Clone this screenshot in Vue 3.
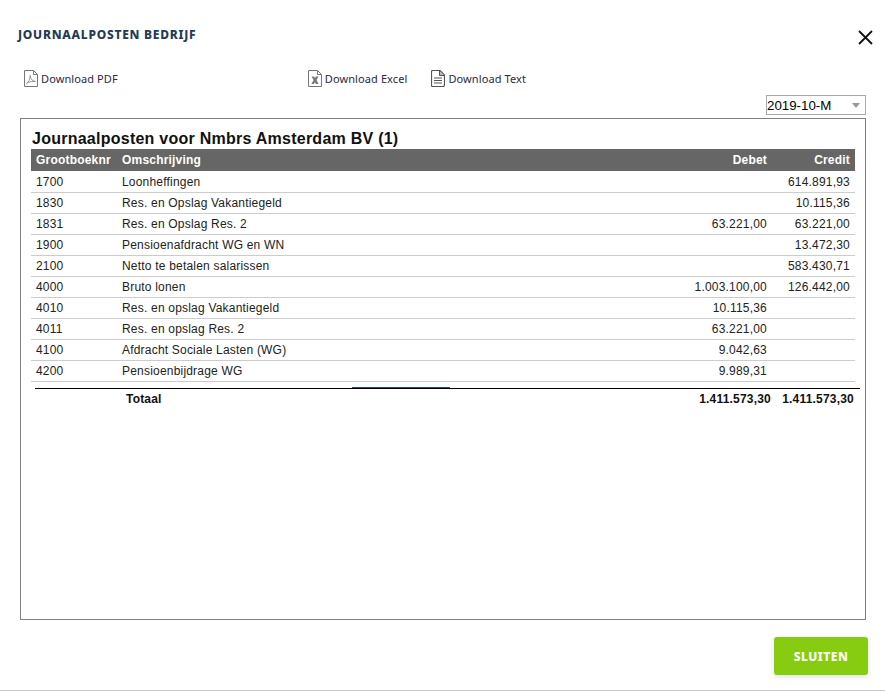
<script setup>
const rows = [
  { nr: '1700', name: 'Loonheffingen', debet: '', credit: '614.891,93' },
  { nr: '1830', name: 'Res. en Opslag Vakantiegeld', debet: '', credit: '10.115,36' },
  { nr: '1831', name: 'Res. en Opslag Res. 2', debet: '63.221,00', credit: '63.221,00' },
  { nr: '1900', name: 'Pensioenafdracht WG en WN', debet: '', credit: '13.472,30' },
  { nr: '2100', name: 'Netto te betalen salarissen', debet: '', credit: '583.430,71' },
  { nr: '4000', name: 'Bruto lonen', debet: '1.003.100,00', credit: '126.442,00' },
  { nr: '4010', name: 'Res. en opslag Vakantiegeld', debet: '10.115,36', credit: '' },
  { nr: '4011', name: 'Res. en opslag Res. 2', debet: '63.221,00', credit: '' },
  { nr: '4100', name: 'Afdracht Sociale Lasten (WG)', debet: '9.042,63', credit: '' },
  { nr: '4200', name: 'Pensioenbijdrage WG', debet: '9.989,31', credit: '' },
]
</script>

<template>
  <div class="modal">
    <header class="modal__head">
      <h1 class="modal__title">JOURNAALPOSTEN BEDRIJF</h1>
      <svg class="modal__close" width="15" height="15" viewBox="0 0 15 15" aria-label="Sluiten">
        <path d="M1 1 14 14M14 1 1 14" stroke="#111" stroke-width="1.8" fill="none" />
      </svg>
    </header>

    <div class="downloads">
      <a class="dl dl--pdf">
        <svg width="14" height="17" viewBox="0 0 14 17">
          <path d="M.5.5h9l4 4v12H.5z" fill="#fff" stroke="#777" />
          <path d="M9.500.5v4h4" fill="none" stroke="#777" />
          <path d="M2.500 13.500c2-1 3.500-4 3.700-8 .3 3.500 2 5.500 5.300 6-3-.3-6.500.2-9 2z" fill="none" stroke="#888" stroke-width=".9" />
        </svg>
        Download PDF
      </a>
      <a class="dl dl--excel">
        <svg width="14" height="17" viewBox="0 0 14 17">
          <path d="M.5.5h9l4 4v12H.5z" fill="#fff" stroke="#777" />
          <path d="M9.500.5v4h4" fill="none" stroke="#777" />
          <path d="M3.500 6.500h2.700L7 8.300l.9-1.800h2.600L8.500 10l2.100 4H7.900L7 12l-1 2H3.400l2.200-4z" fill="#777" />
        </svg>
        Download Excel
      </a>
      <a class="dl">
        <svg width="14" height="17" viewBox="0 0 14 17">
          <path d="M1.500.5h7.500l4.500 4.500v10a1.500 1.500 0 0 1-1.500 1.500H1.500a1 1 0 0 1-1-1v-14a1 1 0 0 1 1-1z" fill="#fff" stroke="#555" stroke-width="1.200" />
          <path d="M8.500 1v4.500H13" fill="#bbb" stroke="#555" />
          <path d="M3 8h8M3 10.500h8M3 13h8" stroke="#555" stroke-width="1.100" />
        </svg>
        Download Text
      </a>
    </div>

    <div class="period">
      <div class="period__select">
        <span>2019-10-M</span>
        <i class="period__arrow"></i>
      </div>
    </div>

    <section class="report">
      <h2 class="report__title">Journaalposten voor Nmbrs Amsterdam BV (1)</h2>
      <div class="grid grid--head">
        <span>Grootboeknr</span>
        <span>Omschrijving</span>
        <span class="num">Debet</span>
        <span class="num">Credit</span>
      </div>
      <div v-for="row in rows" :key="row.nr" class="grid grid--row">
        <span>{{ row.nr }}</span>
        <span>{{ row.name }}</span>
        <span class="num">{{ row.debet }}</span>
        <span class="num">{{ row.credit }}</span>
      </div>
      <div class="total">
        <i class="total__mark"></i>
        <span class="total__label">Totaal</span>
        <span class="total__num total__num--debet">1.411.573,30</span>
        <span class="total__num">1.411.573,30</span>
      </div>
    </section>

    <footer class="modal__foot">
      <button class="close-btn" type="button">SLUITEN</button>
    </footer>
  </div>
</template>

<style>
html, body {
  margin: 0;
  background: #fff;
}
</style>

<style scoped>
.modal {
  width: 885px;
  height: 691px;
  box-sizing: border-box;
  display: flex;
  flex-direction: column;
  background: #fff;
  border-bottom: 1px solid #c9c9d3;
  overflow: hidden;
}

.modal__head {
  height: 66px;
  padding: 0 12px 0 18px;
  display: flex;
  justify-content: space-between;
  flex-shrink: 0;
}

.modal__title {
  margin: 26px 0 0;
  font: 800 12px/17px "Noto Sans", sans-serif;
  letter-spacing: 0.75px;
  color: #253b55;
}

.modal__close {
  margin: 29.500px 0 0;
}

.downloads {
  height: 24px;
  padding-left: 24px;
  display: flex;
  align-items: center;
  flex-shrink: 0;
}

.dl {
  display: flex;
  align-items: center;
  gap: 3px;
  font: 400 11px/17px "Noto Sans", sans-serif;
  letter-spacing: 0.1px;
  color: #2a2a44;
  margin-right: 24px;
}

.dl--pdf {
  margin-right: 190px;
}

.period {
  height: 23px;
  padding: 5px 19px 0 0;
  display: flex;
  justify-content: flex-end;
  flex-shrink: 0;
}

.period__select {
  width: 100px;
  height: 20px;
  box-sizing: border-box;
  border: 1px solid #a9a9a9;
  display: flex;
  align-items: center;
  justify-content: space-between;
  padding: 0 5px 0 0;
  font: 400 13.300px "Liberation Sans", sans-serif;
  color: #000;
}

.period__arrow {
  width: 0;
  height: 0;
  border: 4px solid transparent;
  border-top: 5px solid #999;
  border-bottom: 0;
}

.report {
  width: 846px;
  height: 502px;
  box-sizing: border-box;
  margin-left: 20px;
  padding: 10px 10px 0;
  border: 1px solid #808080;
  font: 400 12px "Liberation Sans", sans-serif;
  letter-spacing: 0.2px;
  color: #222;
  flex-shrink: 0;
}

.report__title {
  margin: 0 0 0 1px;
  font: 700 16px/20px "Liberation Sans", sans-serif;
  letter-spacing: 0.25px;
  color: #111;
}

.grid {
  display: grid;
  grid-template-columns: 86px 1fr 120px 83px;
  align-items: center;
  width: 824px;
  box-sizing: border-box;
  padding: 0 5px;
}

.grid--head {
  height: 22px;
  background: #666;
  color: #fff;
  font-weight: 700;
}

.grid--row {
  height: 21px;
  border-bottom: 1px solid #ccc;
}

.grid--head + .grid--row {
  height: 22px;
}

.num {
  text-align: right;
  white-space: nowrap;
}

.total {
  position: relative;
  width: 825px;
  margin: 6px 0 0 4px;
  height: 20px;
  border-top: 1px solid #000;
  display: flex;
  align-items: center;
  font-weight: 700;
  color: #111;
}

.total__mark {
  position: absolute;
  left: 317px;
  top: -2px;
  width: 98px;
  height: 1px;
  background: #1c4a6e;
}

.total__label {
  margin-left: 91px;
}

.total__num {
  width: 83px;
  text-align: right;
  white-space: nowrap;
}

.total__num--debet {
  margin-left: auto;
  width: 120px;
}

.total__num:last-child {
  margin-right: 6px;
}

.modal__foot {
  flex: 1;
  padding: 17px 17px 0 0;
  display: flex;
  justify-content: flex-end;
  align-items: flex-start;
}

.close-btn {
  width: 94px;
  height: 38px;
  border: 0;
  border-radius: 3px;
  background: #88cc11;
  color: #fff;
  font: 800 12px "Noto Sans", sans-serif;
  letter-spacing: 0.5px;
  box-shadow: 0 2px 5px rgb(0 0 0 / 0.12);
}
</style>
